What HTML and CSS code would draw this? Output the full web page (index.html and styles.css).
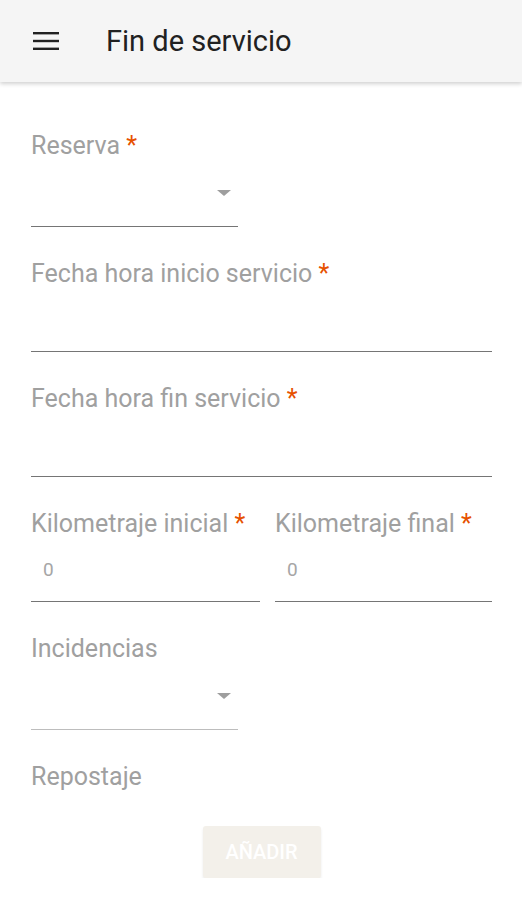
FILE: index.html
```html
<!DOCTYPE html>
<html lang="es">
<head>
    <meta charset="UTF-8">
    <meta name="viewport" content="width=device-width, initial-scale=1.0">
    <title>Fin de servicio</title>
    <link rel="stylesheet" href="styles.css">
</head>
<body>
    <header class="toolbar">
        <button class="menu-btn" aria-label="Menú">
            <svg width="26" height="18" viewBox="0 0 26 18">
                <rect x="0" y="0" width="26" height="2.4" fill="#212121"/>
                <rect x="0" y="7.8" width="26" height="2.4" fill="#212121"/>
                <rect x="0" y="15.6" width="26" height="2.4" fill="#212121"/>
            </svg>
        </button>
        <h1>Fin de servicio</h1>
    </header>

    <form class="form">
        <div class="field">
            <label>Reserva <span class="req">*</span></label>
            <div class="select"><span class="arrow"></span></div>
        </div>

        <div class="field">
            <label>Fecha hora inicio servicio <span class="req">*</span></label>
            <div class="input"></div>
        </div>

        <div class="field">
            <label>Fecha hora fin servicio <span class="req">*</span></label>
            <div class="input"></div>
        </div>

        <div class="field row">
            <div class="col left">
                <label>Kilometraje inicial <span class="req">*</span></label>
                <div class="input"><span class="value">0</span></div>
            </div>
            <div class="col">
                <label>Kilometraje final <span class="req">*</span></label>
                <div class="input"><span class="value">0</span></div>
            </div>
        </div>

        <div class="field">
            <label>Incidencias</label>
            <div class="select light"><span class="arrow"></span></div>
        </div>

        <div class="field last">
            <label>Repostaje</label>
        </div>

        <div class="actions">
            <button type="button" class="add-btn" disabled>AÑADIR</button>
        </div>
    </form>
</body>
</html>
```

FILE: styles.css
```css
body {
    margin: 0;
    padding: 0;
    background: #ffffff;
    font-family: Roboto, "Noto Sans", sans-serif;
}

.toolbar {
    height: 82px;
    background-color: #f5f5f5;
    display: flex;
    align-items: center;
    box-shadow: 0 2px 4px rgba(0, 0, 0, 0.18);
}
.menu-btn {
    border: none;
    background: none;
    padding: 0;
    margin-left: 33px;
    width: 26px;
    height: 18px;
    display: flex;
}
.toolbar h1 {
    margin: 0 0 0 47px;
    font-size: 29px;
    font-weight: 400;
    color: #212121;
}

.form {
    padding: 50px 30px 0 31px;
}
.field {
    margin-bottom: 33px;
}
.field label {
    display: block;
    font-size: 25px;
    line-height: 28px;
    color: #a0a0a0;
}
.req {
    color: #e65100;
}

.select {
    width: 207px;
    height: 66px;
    border-bottom: 1.5px solid #757575;
    display: flex;
    justify-content: flex-end;
    align-items: center;
}
.select.light {
    border-bottom-color: #bdbdbd;
}
.arrow {
    width: 0;
    height: 0;
    margin-right: 7px;
    border-left: 7px solid transparent;
    border-right: 7px solid transparent;
    border-top: 6px solid #9e9e9e;
}

.input {
    height: 63px;
    border-bottom: 1.5px solid #757575;
    display: flex;
    align-items: center;
}
.value {
    margin-left: 12px;
    font-size: 19px;
    color: #a6a6a6;
}

.row {
    display: grid;
    grid-template-columns: 229px 1fr;
    column-gap: 15px;
}

.field.last {
    margin-bottom: 35px;
}
.actions {
    display: flex;
    justify-content: center;
}
.add-btn {
    width: 118px;
    height: 52px;
    border: none;
    border-radius: 3px;
    background-color: #f3f0ea;
    color: #ffffff;
    font-family: Roboto, sans-serif;
    font-size: 20px;
    font-weight: 500;
    box-shadow: 0 2px 3px rgba(0, 0, 0, 0.08);
}
```
